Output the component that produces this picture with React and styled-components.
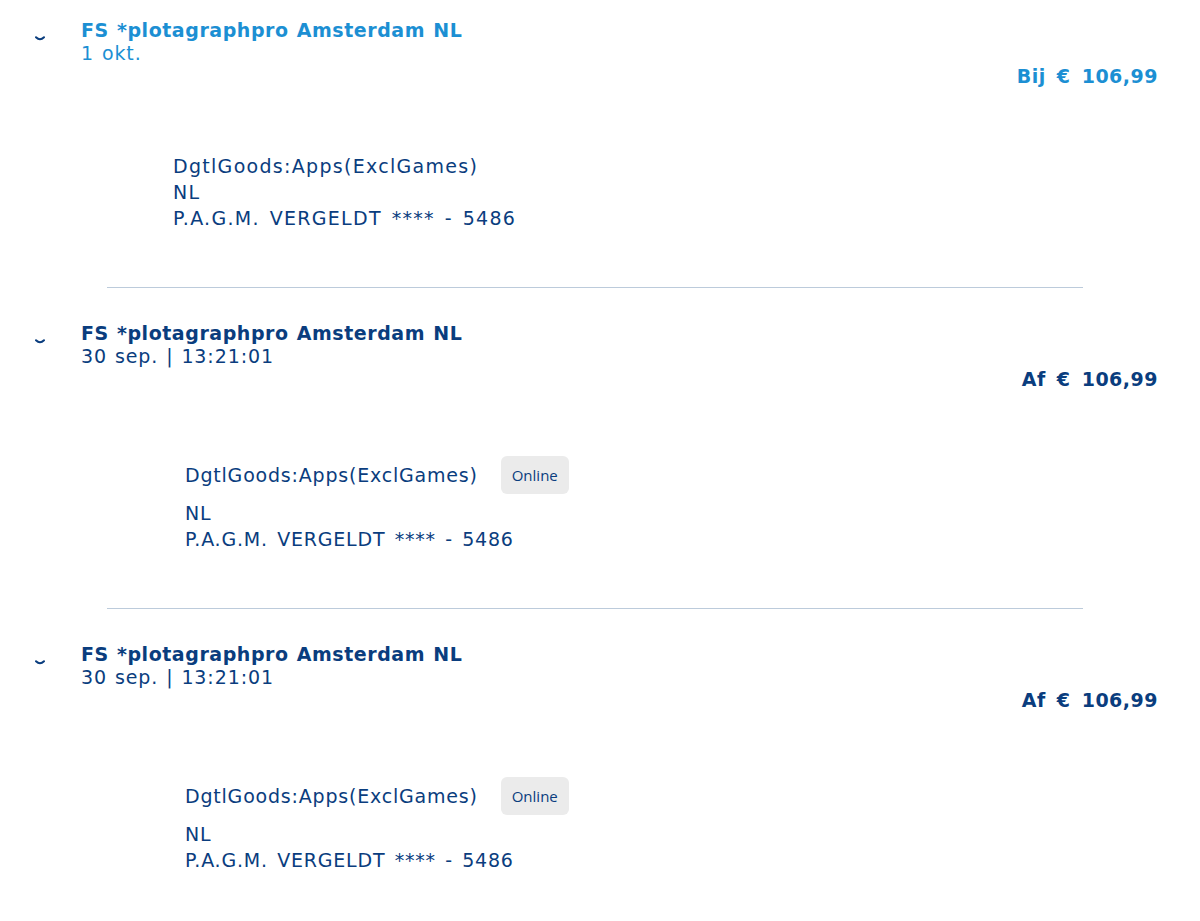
import React from "react";
import styled, { createGlobalStyle } from "styled-components";

const GlobalStyle = createGlobalStyle`
  body {
    margin: 0;
    background: #ffffff;
    font-family: "DejaVu Sans", Verdana, sans-serif;
  }
`;

const NAVY = "#0a3d7e";
const SKY = "#1c8fd3";

const List = styled.div`
  padding: 19px 42px 0 35px;
`;

const Transaction = styled.div`
  color: ${(p) => (p.$pending ? SKY : NAVY)};
`;

const Header = styled.div`
  display: flex;
  align-items: flex-start;
`;

const Chevron = styled.svg`
  flex: none;
  width: 10px;
  height: 6px;
  margin-top: 17px;
  margin-right: 36px;
  color: ${NAVY};
`;

const TitleBlock = styled.div`
  display: flex;
  flex-direction: column;
  font-size: 19px;
  line-height: 23px;
`;

const Title = styled.div`
  font-weight: bold;
  letter-spacing: 0.55px;
  word-spacing: 1px;
`;

const Date = styled.div`
  letter-spacing: 0.9px;
  word-spacing: 1px;
`;

const Amount = styled.div`
  text-align: right;
  font-size: 19px;
  line-height: 23px;
  font-weight: bold;
  letter-spacing: 0.5px;
  word-spacing: 4px;
`;

const Details = styled.div`
  margin-top: 65px;
  padding-left: ${(p) => p.$indent}px;
  color: ${NAVY};
  font-size: 19px;
  line-height: 26px;
  letter-spacing: ${(p) => p.$spacing}px;
  word-spacing: 2.5px;
`;

const FirstLine = styled.div`
  display: flex;
  align-items: center;
  gap: 23px;
  min-height: ${(p) => (p.$badge ? 38 : 26)}px;
  margin-bottom: ${(p) => (p.$badge ? 6 : 0)}px;
`;

const Badge = styled.span`
  display: inline-flex;
  align-items: center;
  height: 38px;
  padding: 0 11px;
  border-radius: 6px;
  background: #ebebeb;
  font-family: "Open Sans", "Liberation Sans", sans-serif;
  font-size: 15px;
  letter-spacing: 0;
  word-spacing: 0;
  color: ${NAVY};
`;

const Divider = styled.hr`
  border: none;
  border-top: 1px solid #bccbdb;
  margin: 56px 0 34px 72px;
  width: 976px;
`;

const rows = [
  { pending: true, date: "1 okt.", kind: "Bij", badge: false, indent: 138, spacing: 1.3 },
  { pending: false, date: "30 sep. | 13:21:01", kind: "Af", badge: true, indent: 150, spacing: 0.8 },
  { pending: false, date: "30 sep. | 13:21:01", kind: "Af", badge: true, indent: 150, spacing: 0.8 },
];

const App = () => {
  return (
    <>
      <GlobalStyle />
      <List>
        {rows.map((r, i) => (
          <React.Fragment key={i}>
            <Transaction $pending={r.pending}>
              <Header>
                <Chevron viewBox="0 0 10 6">
                  <path d="M1 1.2 Q5 5.2 9 1.2" fill="none" stroke="currentColor" strokeWidth="2" strokeLinecap="round" />
                </Chevron>
                <TitleBlock>
                  <Title>FS *plotagraphpro Amsterdam NL</Title>
                  <Date>{r.date}</Date>
                </TitleBlock>
              </Header>
              <Amount>{r.kind} € 106,99</Amount>
              <Details $indent={r.indent} $spacing={r.spacing}>
                <FirstLine $badge={r.badge}>
                  DgtlGoods:Apps(ExclGames)
                  {r.badge && <Badge>Online</Badge>}
                </FirstLine>
                <div>NL</div>
                <div>P.A.G.M. VERGELDT **** - 5486</div>
              </Details>
            </Transaction>
            {i < rows.length - 1 && <Divider />}
          </React.Fragment>
        ))}
      </List>
    </>
  );
};

export default App;
